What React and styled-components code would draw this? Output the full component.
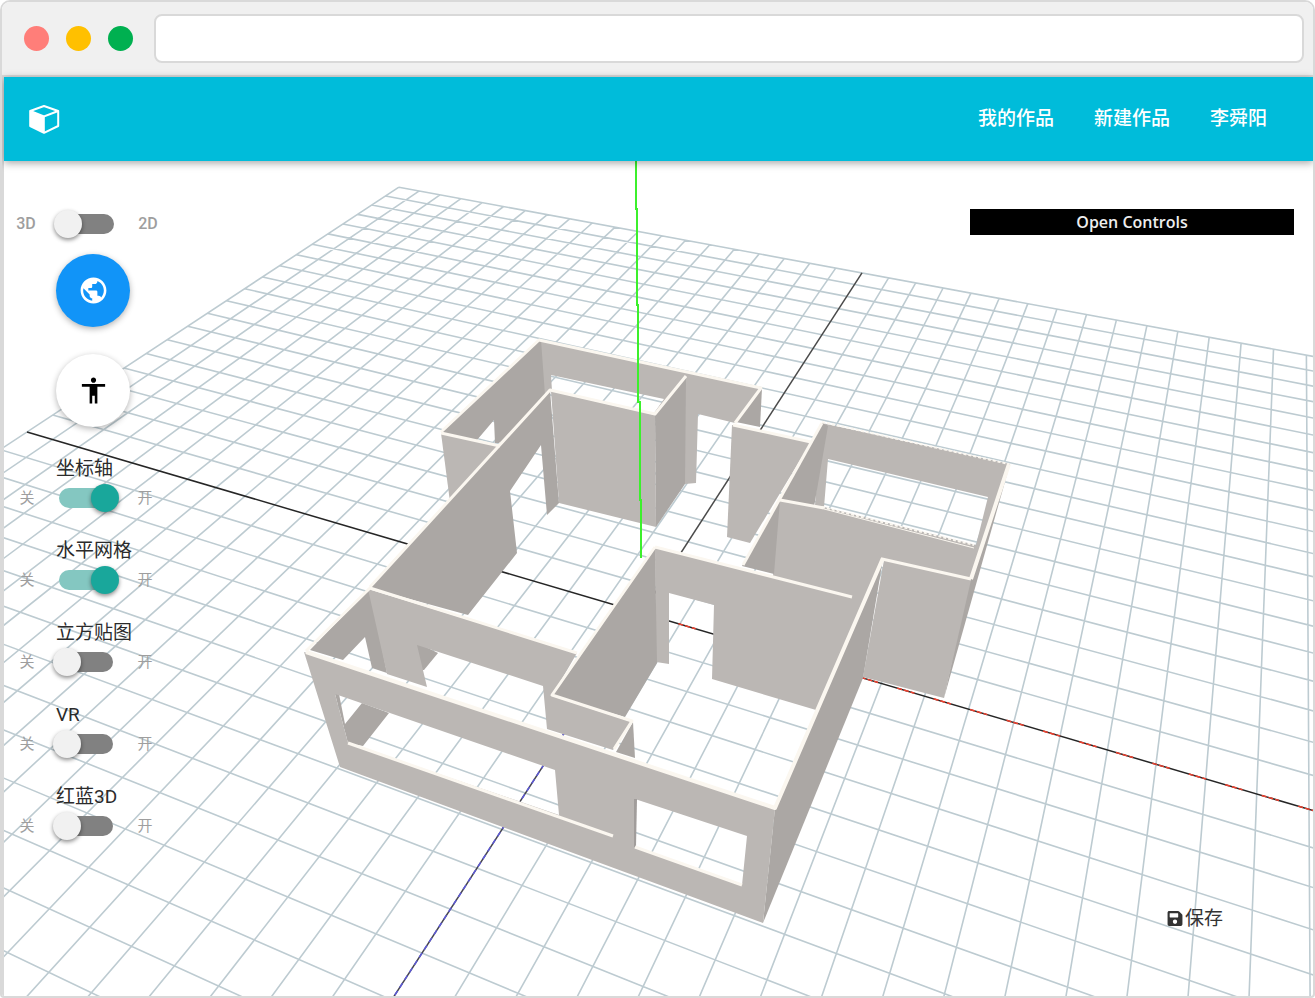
import React from "react";
import styled, { createGlobalStyle } from "styled-components";
import { MdPublic, MdAccessibility } from "react-icons/md";
import { FaSave } from "react-icons/fa";

const GlobalStyle = createGlobalStyle`
  *, *::before, *::after { box-sizing: border-box; }
  body {
    margin: 0;
    background: #fff;
    color: #2b2b2b;
    font-family: Roboto, "Noto Sans CJK SC", sans-serif;
  }
  button, input { font: inherit; }
`;

const Frame = styled.div`
  min-height: 100vh;
  display: flex;
  flex-direction: column;
  border: 2px solid #d9d9d9;
  border-radius: 10px 10px 4px 4px;
  overflow: hidden;
`;

const BrowserBar = styled.div`
  display: flex;
  align-items: center;
  gap: 17px;
  height: 75px;
  padding: 0 9px 0 22px;
  background: #f0f0f0;
  border-bottom: 2px solid #d9d9d9;
`;

const Dot = styled.span`
  flex: none;
  width: 25px;
  height: 25px;
  border-radius: 50%;
  background: ${(p) => p.$color};
`;

const Address = styled.input`
  flex: 1;
  min-width: 0;
  height: 49px;
  margin-left: 4px;
  padding: 0 16px;
  border: 2px solid #d9d9d9;
  border-radius: 8px;
  background: #fff;
  outline: none;
`;

const Page = styled.div`
  flex: 1;
  display: flex;
  flex-direction: column;
  border-left: 2px solid #d9d9d9;
`;

const Header = styled.header`
  position: relative;
  z-index: 1;
  display: flex;
  align-items: center;
  justify-content: space-between;
  height: 84px;
  padding: 0 46px 0 24px;
  background: #00bcda;
  box-shadow: 0 2px 8px rgba(0, 0, 0, 0.36);
`;

const LogoLink = styled.a`
  display: flex;
`;

const Nav = styled.nav`
  display: flex;
  gap: 40px;
`;

const NavLink = styled.a`
  color: #fff;
  font-size: 19px;
  line-height: 28px;
  font-weight: 500;
  text-decoration: none;
`;

const Stage = styled.main`
  position: relative;
  flex: 1;
  display: flex;
  justify-content: space-between;
  min-height: 720px;
`;

const Scene = styled.svg`
  position: absolute;
  inset: 0;
  width: 100%;
  height: 100%;
`;

const Sidebar = styled.aside`
  position: relative;
  display: flex;
  flex-direction: column;
  align-items: flex-start;
  padding: 48px 0 0 8px;
`;

const SwitchRow = styled.div`
  display: flex;
  align-items: center;
  gap: 20px;
  height: 30px;
`;

const StateText = styled.span`
  width: 28px;
  text-align: center;
  color: #9e9e9e;
  font-size: 16px;
  font-weight: 500;
  line-height: 30px;
`;

const OptionState = styled(StateText)`
  font-size: 15px;
  font-weight: 400;
`;

const Toggle = styled.input`
  appearance: none;
  position: relative;
  flex: none;
  width: 54px;
  height: 20px;
  margin: 0;
  border-radius: 10px;
  background: #818181;
  cursor: pointer;

  &::before {
    content: "";
    position: absolute;
    top: -4px;
    left: -6px;
    width: 28px;
    height: 28px;
    border-radius: 50%;
    background: #f1f1f1;
    box-shadow: 0 2px 4px rgba(0, 0, 0, 0.45);
  }

  &:checked {
    background: #84c7c1;
  }

  &:checked::before {
    left: 32px;
    background: #19a79b;
  }
`;

const RoundButton = styled.button`
  display: flex;
  align-items: center;
  justify-content: center;
  width: 74px;
  height: 73px;
  padding: 0;
  margin: ${(p) => p.$gap}px 0 0 44px;
  border: 0;
  border-radius: 50%;
  background: ${(p) => p.$bg};
  color: ${(p) => p.$fg};
  font-size: 31px;
  box-shadow: 0 2px 6px rgba(0, 0, 0, 0.3);
  cursor: pointer;
`;

const Options = styled.div`
  display: flex;
  flex-direction: column;
  gap: 24px;
  margin-top: 28px;
`;

const Option = styled.div`
  display: flex;
  flex-direction: column;
`;

const OptionTitle = styled.label`
  padding-left: 44px;
  font-size: 19px;
  line-height: 28px;
`;

const OptionRow = styled(SwitchRow)`
  gap: 18px;
  padding-left: 1px;
`;

const RightColumn = styled.div`
  position: relative;
  display: flex;
  flex-direction: column;
  justify-content: space-between;
  width: 324px;
  margin-right: 19px;
  padding: 48px 0 63px;
`;

const ControlsButton = styled.button`
  height: 26px;
  padding: 0;
  border: 0;
  background: #000;
  color: #eee;
  font: 600 16px/26px "Open Sans", sans-serif;
  cursor: pointer;
`;

const SaveButton = styled.button`
  display: flex;
  align-items: center;
  align-self: flex-end;
  gap: 2px;
  margin-right: 71px;
  padding: 0;
  border: 0;
  background: none;
  color: #333;
  font-size: 19px;
  line-height: 28px;
  cursor: pointer;

  svg {
    width: 16px;
    height: 17px;
    margin-bottom: 2px;
  }
`;

/* Projects a point of the ground grid (i across, j towards the viewer). */
const project = (i, j) => {
  const w = 1 - 0.0107 * i - 0.025 * j;
  const x = (642 + 30.46 * i - 32.55 * j) / w;
  const y = (613 + 4.43 * i + 10.18 * j) / w;
  return `${x.toFixed(1)} ${y.toFixed(1)}`;
};

const HALF = 20;
const steps = Array.from({ length: HALF * 2 + 1 }, (_, n) => n - HALF);
const gridPath = steps
  .filter((n) => n !== 0)
  .map(
    (n) =>
      `M${project(n, -HALF)}L${project(n, HALF)}M${project(-HALF, n)}L${project(HALF, n)}`
  )
  .join("");

const LIGHT = "#bbb7b4";
const DARK = "#aba7a4";
const EDGE = "#fbf7f0";

/* Faces and top edges, ordered from the back of the flat to the front. */
const faces = [
  { f: LIGHT, d: "M540 340L762 388L735 423L698 414L696 483L685 484L655 415L551 391L498 447ZM551 375L552 391L654 413L664 399Z" },
  { f: DARK, d: "M539 340L541 340L545 395L499 443L495 443L494 420L477 440L441 433Z" },
  { f: DARK, d: "M762 388L760 427L736 422Z" },
  { f: LIGHT, d: "M441 433L501 447L450 502Z" },
  { f: DARK, d: "M499 447L550 390L559 503L547 515L541 445L510 491L517 553L468 615L370 588Z" },
  { f: LIGHT, d: "M551 391L655 415L656 527L559 503Z" },
  { f: DARK, d: "M655 415L686 376L685 484L656 527Z" },
  { f: LIGHT, d: "M732 425L811 442L750 543L727 537Z" },
  { f: LIGHT, d: "M822 423L1010 464L971 581L882 559L862 605L852 598L773 576L779 499L815 505ZM828 459L824 507L976 545L988 497Z" },
  { f: DARK, d: "M822 423L828 426L814 507L780 500Z" },
  { f: DARK, d: "M780 500L774 574L742 566Z" },
  { f: DARK, d: "M1010 464L944 698L969 580Z" },
  { f: LIGHT, d: "M884 560L971 580L944 698L863 677Z" },
  { f: LIGHT, d: "M655 547L852 597L868 597L816 710L712 679L714 605L669 593L669 664L656 662Z" },
  { f: DARK, d: "M655 547L657 663L625 717L551 696Z" },
  { f: DARK, d: "M883 559L863 678L763 923L775 808Z" },
  { f: DARK, d: "M370 588L387 673L372 668L365 637L343 660L310 650Z" },
  { f: DARK, d: "M412 640L438 653L424 670L418 670Z" },
  { f: LIGHT, d: "M368 589L577 653L552 696L632 722L613 750L547 729L543 686L417 645L427 687L387 674Z" },
  { f: DARK, d: "M633 722L635 758L616 752Z" },
  { f: DARK, d: "M345 724L362 703L389 713L363 746L348 743L335 694L339 694Z" },
  { f: LIGHT, d: "M304 652L775 809L763 923L340 767ZM335 694L348 743L559 815L555 770ZM635 799L635 847L742 885L747 836Z" },
  { f: "#a19d9b", d: "M634 799L637 799L636 847L634 847Z" },
];

const edges = [
  "M441 432L539 340L761 388L735 423",
  "M441 433L500 446",
  "M370 587L550 390L655 414L686 376",
  "M733 425L811 442",
  "M743 565L822 423",
  "M780 500L824 508",
  "M655 547L852 597",
  "M655 547L552 695L632 721L614 749",
  "M882 559L971 579",
  "M306 651L370 588L577 653",
  "M348 743L613 836",
  "M635 847L742 885",
];

function FloorPlan() {
  return (
    <Scene
      viewBox="4 161 1309 835"
      preserveAspectRatio="xMidYMin slice"
      role="img"
      aria-label="3D"
      fill="none"
    >
      <path d={gridPath} stroke="#bdcbd1" strokeWidth="1.6" />
      <path d={`M${project(0, -HALF)}L${project(0, 0)}`} stroke="#4a4a4a" strokeWidth="1.5" />
      <path d={`M${project(-HALF, 0)}L${project(0, 0)}`} stroke="#262626" strokeWidth="1.5" />
      <path d={`M${project(0, 0)}L${project(0, HALF)}`} stroke="#44444e" strokeWidth="1.5" />
      <path d={`M${project(0, 0)}L${project(0, HALF)}`} stroke="#5c58d8" strokeWidth="1.5" strokeDasharray="5 4" />
      <path d={`M${project(0, 0)}L${project(HALF, 0)}`} stroke="#262626" strokeWidth="1.5" />
      <path d={`M${project(0, 0)}L${project(HALF, 0)}`} stroke="#f0402e" strokeWidth="1.5" strokeDasharray="5 2 5 2 4 20" />
      {faces.map((face) => (
        <path key={face.d} d={face.d} fill={face.f} fillRule="evenodd" />
      ))}
      <g stroke={EDGE} strokeWidth="3" strokeLinejoin="round">
        {edges.map((d) => (
          <path key={d} d={d} />
        ))}
        <path d="M822 422L1009 464M822 507L974 545" strokeDasharray="3 2" strokeWidth="2" />
        <path d="M824 509L974 548" strokeWidth="1" />
        <path d="M1009 464L971 579M883 558L775 808L306 652" strokeWidth="4" />
      </g>
      <path d="M636 161V209L637 209V305L638 305V402L640 402V500L641 500V558" stroke="#3cf02c" strokeWidth="2" />
    </Scene>
  );
}

function CubeLogo() {
  return (
    <svg width="32" height="32" viewBox="0 0 32 32" aria-hidden="true">
      <path
        d="M16 3L30.2 8V23L16 29.8L2.2 23V8Z"
        fill="none"
        stroke="#fff"
        strokeWidth="2"
        strokeLinejoin="round"
      />
      <path d="M2.2 8L16 13.4L30.2 8" fill="none" stroke="#fff" strokeWidth="2" />
      <path d="M2.2 8L16.8 13.4V30L2.2 23Z" fill="#fff" />
    </svg>
  );
}

const options = [
  { id: "axis", title: "坐标轴", on: true },
  { id: "grid", title: "水平网格", on: true },
  { id: "cubemap", title: "立方贴图", on: false },
  { id: "vr", title: "VR", on: false },
  { id: "anaglyph", title: "红蓝3D", on: false },
];

export default function App() {
  return (
    <>
      <GlobalStyle />
      <Frame>
        <BrowserBar>
          <Dot $color="#ff7e79" />
          <Dot $color="#ffc000" />
          <Dot $color="#00b050" />
          <Address type="text" aria-label="URL" />
        </BrowserBar>
        <Page>
          <Header>
            <LogoLink href="#" aria-label="3D">
              <CubeLogo />
            </LogoLink>
            <Nav>
              <NavLink href="#works">我的作品</NavLink>
              <NavLink href="#new">新建作品</NavLink>
              <NavLink href="#user">李舜阳</NavLink>
            </Nav>
          </Header>
          <Stage>
            <FloorPlan />
            <Sidebar>
              <SwitchRow>
                <StateText>3D</StateText>
                <Toggle type="checkbox" aria-label="3D / 2D" />
                <StateText>2D</StateText>
              </SwitchRow>
              <RoundButton type="button" aria-label="全景" $gap={15} $bg="#1194f8" $fg="#fff">
                <MdPublic />
              </RoundButton>
              <RoundButton type="button" aria-label="漫游" $gap={27} $bg="#fff" $fg="#000">
                <MdAccessibility />
              </RoundButton>
              <Options>
                {options.map((o) => (
                  <Option key={o.id}>
                    <OptionTitle htmlFor={o.id}>{o.title}</OptionTitle>
                    <OptionRow>
                      <OptionState>关</OptionState>
                      <Toggle id={o.id} type="checkbox" defaultChecked={o.on} />
                      <OptionState>开</OptionState>
                    </OptionRow>
                  </Option>
                ))}
              </Options>
            </Sidebar>
            <RightColumn>
              <ControlsButton type="button">Open Controls</ControlsButton>
              <SaveButton type="button">
                <FaSave />
                保存
              </SaveButton>
            </RightColumn>
          </Stage>
        </Page>
      </Frame>
    </>
  );
}
